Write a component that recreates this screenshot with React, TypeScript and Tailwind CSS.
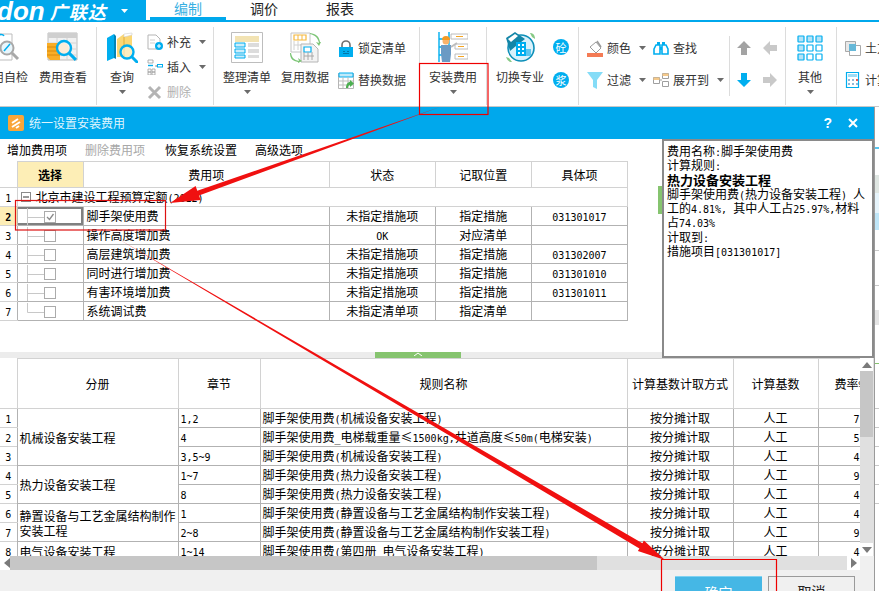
import type { ReactNode } from 'react';

const CYAN = '#00aeef';

// ascii runs are half width in the reference (SimSun), so give them a 6px mono face
function Mix({ text }: { text: string }) {
  return (
    <>
      {text.split(/([\x20-\x7e]+)/).map((part, i) =>
        i % 2 === 1 ? (
          <span key={i} className="font-['DejaVu_Sans_Mono',monospace] text-[10px] leading-none">
            {part}
          </span>
        ) : (
          part
        ),
      )}
    </>
  );
}

function Caret({ color = '#6b6b6b' }: { color?: string }) {
  return (
    <svg width="7" height="4" viewBox="0 0 7 4" className="shrink-0">
      <path d="M0 0h7L3.5 4z" fill={color} />
    </svg>
  );
}

function Icon({ w = 16, h = 16, children }: { w?: number; h?: number; children: ReactNode }) {
  return (
    <svg width={w} height={h} viewBox={`0 0 ${w} ${h}`} className="shrink-0" fill="none">
      {children}
    </svg>
  );
}

/* ---------- ribbon icons ---------- */

const Magnifier = ({ x, y, r = 6, c = CYAN }: { x: number; y: number; r?: number; c?: string }) => (
  <>
    <circle cx={x} cy={y} r={r} stroke={c} strokeWidth="2.4" fill="#ffffff" fillOpacity="0.55" />
    <path d={`M${x + r * 0.7} ${y + r * 0.7}l${r} ${r}`} stroke={c} strokeWidth="3" />
  </>
);

const CheckIcon = () => (
  <Icon w={32} h={31}>
    <path d="M0 2h18v26H0z" fill="#fff" stroke="#bdbdbd" />
    <path d="M3 4c3-2 6-2 7 0" stroke={CYAN} strokeWidth="1.5" />
    <circle cx="13" cy="16" r="6.5" fill="#e8f6fc" stroke="#a8a8a8" strokeWidth="2" />
    <path d="M10 19l6-7" stroke={CYAN} strokeWidth="1.5" />
    <path d="M18 21l6 6" stroke="#a8a8a8" strokeWidth="3" />
  </Icon>
);

const FeeViewIcon = () => (
  <Icon w={32} h={31}>
    <path d="M1 1h29v27H1z" fill="#f1f1f1" stroke="#bcbcbc" />
    <path d="M1 1h29v5H1z" fill="#cfcfcf" />
    <path d="M1 11h29M1 17h29M1 23h29M10 6v22M20 6v22" stroke="#d4d4d4" />
    <path d="M0 11h13v17H3l-3-3z" fill="#f9ad26" />
    <path d="M0 15h13M0 19h13M0 23h13" stroke="#d98a0c" />
    <circle cx="16" cy="17" r="6" fill="#fbd6a6" />
    <Magnifier x={17} y={16} r={7} />
  </Icon>
);

const QueryIcon = () => (
  <Icon w={32} h={31}>
    <path d="M1 6l7-4v24l-7 3z" fill={CYAN} />
    <path d="M8 2l2 2v23l-2-1z" fill="#0085b8" />
    <path d="M11 7l7-5 8 0v23H11z" fill="#fbd774" />
    <path d="M18 2l8-1v2l-8 2z" fill="#fff" stroke="#cfcfcf" strokeWidth="0.6" />
    <path d="M18 5v22" stroke="#dfae3a" />
    <Magnifier x={21} y={20} r={6.5} />
  </Icon>
);

const AddDocIcon = () => (
  <Icon>
    <path d="M1 1h8l4 4v10H1z" fill="#fff" stroke="#b5b5b5" />
    <path d="M3 6h5M3 9h5" stroke="#cfcfcf" />
    <circle cx="12" cy="12" r="4" fill={CYAN} />
    <path d="M10 12h4M12 10v4" stroke="#fff" />
  </Icon>
);

const InsertIcon = () => (
  <Icon>
    <path d="M1 1h5v3H1zM1 10h3v3H1zM5 10h3v3H5zM1 13h3v3H1zM5 13h3v3H5z" stroke="#9f9f9f" strokeWidth="0.8" />
    <path d="M1 6.5h5" stroke={CYAN} strokeWidth="1.4" />
    <path d="M8 7h3M9 7h2" stroke="#9f9f9f" />
    <rect x="10.5" y="5.5" width="5" height="2.5" stroke={CYAN} />
  </Icon>
);

const DeleteIcon = () => (
  <Icon>
    <path d="M2 3l11 11M13 3L2 14" stroke="#b4b4b4" strokeWidth="3" />
  </Icon>
);

const SortIcon = () => (
  <Icon w={32} h={31}>
    <path d="M.5.5h31v30H.5z" fill="#fff" stroke="#bdbdbd" />
    <path d="M4 4h24v6H4z" fill="#f2e3b3" />
    <path d="M4 11h10v4H4zM4 17h10v4H4zM4 23h10v3H4z" fill="#cdeefb" stroke={CYAN} />
    <path d="M17 11h11v4H17zM17 17h11v4H17zM17 23h11v3H17z" fill="#dcdcdc" />
  </Icon>
);

const ReuseIcon = () => (
  <Icon w={31} h={31}>
    <path d="M1 1h19v19H1z" fill="#fff" stroke="#c4c4c4" />
    <path d="M4 3h12v5H4z" fill="#fff" stroke="#f5b83d" strokeWidth="1.2" />
    <path d="M8 3v5M12 3v5" stroke="#f5b83d" />
    <path d="M4 9v9M8 9v9M4 13h10" stroke="#d0d0d0" />
    <path d="M11 12h12l5 5v13H11z" fill="#f3f3f3" stroke="#b5b5b5" />
    <path d="M14 15h7v5h-7z" fill="#fff" stroke={CYAN} strokeWidth="1.2" />
    <path d="M14 20v8M18 20v8M22 20v8M14 24h10" stroke="#a8a8a8" />
    <path d="M20 2c5 1 8 4 9 9l-3-1 3 4 2-4-1 0c-1-6-4-8-10-9z" fill="#7cc576" />
    <path d="M1 21c1 5 3 7 8 8l-1-3 4 3-4 2v-1c-5-1-8-3-8-9z" fill="#7cc576" />
  </Icon>
);

const LockIcon = () => (
  <Icon h={17}>
    <path d="M4 8V5a4 4 0 018 0v3" stroke="#6f6f6f" strokeWidth="1.6" />
    <path d="M1 7h14v10H1z" fill={CYAN} />
    <path d="M5 11h2v1H5zM9 11h2v1H9zM5 13h6v1H5z" fill="#0277a8" />
  </Icon>
);

const ReplaceIcon = () => (
  <Icon h={17}>
    <path d="M.5 1.5h15v15H.5z" fill="#fff" stroke="#b5b5b5" />
    <path d="M1 1h14v4H1z" fill="#bfe9f9" stroke={CYAN} />
    <path d="M5 5v11M10 5v11M1 9h14M1 13h14" stroke="#bdbdbd" />
    <path d="M8 16c0-4 2-6 4-6V8l4 3.5-4 3.5v-2c-1 0-2 1-2 3z" fill="#4caf50" />
  </Icon>
);

const InstallIcon = () => (
  <Icon w={30} h={31}>
    <path d="M1 0v30M11 0v30M1 7h10M1 15h10M1 23h10" stroke={CYAN} strokeWidth="1.4" />
    <path d="M13 2h17v5H13zM17 12h13v5H17zM17 22h13v5H17z" fill="#fff" stroke="#bcbcbc" />
    <path d="M18 4.5h7M20 14.5h6M20 24.5h6" stroke="#f5a623" />
    <circle cx="8" cy="9" r="3.5" fill="#f9b26b" />
    <path d="M4 8a4 4 0 018 0z" fill="#f59a23" />
    <path d="M3 13h10v9l-1 8H4l-1-8z" fill="#6b9ac4" />
    <path d="M13 15l6-4" stroke="#bdbdbd" strokeWidth="2" />
  </Icon>
);

const SwitchIcon = () => (
  <Icon w={31} h={31}>
    <circle cx="16" cy="16" r="13" fill="#d9f1fb" stroke="#0d8fb8" strokeWidth="1.6" />
    <path d="M1 6l9-6 10 7-9 7-6 5z" fill="#1486a8" />
    <path d="M3 7l7-5 3 2-7 6z" fill="#fff" />
    <path d="M11 10h10v14H11z" fill={CYAN} />
    <path d="M21 17h5v7h-5z" fill="#5cc6ee" />
    <path d="M13 12h2v2h-2zM17 12h2v2h-2zM13 16h2v2h-2zM17 16h2v2h-2zM13 20h2v2h-2zM17 20h2v2h-2z" fill="#fff" />
    <path d="M25 1c3 0 5 2 5 6l-3-2z" fill="#86c985" />
    <path d="M1 25c1 3 3 5 6 5l-3-4z" fill="#86c985" />
  </Icon>
);

const BucketIcon = () => (
  <Icon h={17}>
    <path d="M3 7l6-5 5 6-5 5z" fill="#fff" stroke="#9a9a9a" />
    <path d="M10 1l4 6" stroke="#9a9a9a" strokeWidth="1.5" />
    <path d="M0 13h16v4H0z" fill="#f47b55" />
  </Icon>
);

const FindIcon = () => (
  <Icon>
    <path d="M4 2h3v5H4zM9 2h3v5H9z" fill={CYAN} />
    <path d="M1 9l2-4h4v9H1zM9 5h4l2 4v5H9z" fill="#fff" stroke={CYAN} strokeWidth="1.6" />
    <path d="M7 7h2v3H7z" fill={CYAN} />
  </Icon>
);

const FilterIcon = () => (
  <Icon h={17}>
    <path d="M0 0h16L10 8v9l-4-2V8z" fill="#84dcf7" />
  </Icon>
);

const ExpandIcon = () => (
  <Icon>
    <path d="M.5 5.5h6v6h-6zM9.5 1.5h6v5h-6zM9.5 9.5h6v5h-6z" fill="#fff" stroke="#9f9f9f" />
    <path d="M.5 5.5h6V8h-6zM9.5 1.5h6V4h-6z" fill="#f5c98a" />
    <path d="M7 8h2" stroke="#9f9f9f" />
  </Icon>
);

const ArrowIcon = ({ dir, color }: { dir: 'up' | 'down' | 'left' | 'right'; color: string }) => {
  const rotate = { up: 0, right: 90, down: 180, left: 270 }[dir];
  return (
    <Icon>
      <path d="M8 1l7 7h-4v7H5V8H1z" fill={color} transform={`rotate(${rotate} 8 8)`} />
    </Icon>
  );
};

const OtherIcon = () => (
  <Icon w={26} h={26}>
    {[0, 9, 18].flatMap((y, r) =>
      [0, 9, 18].map((x, c) => (
        <rect
          key={`${r}${c}`}
          x={x + 1}
          y={y + 1}
          width="6"
          height="6"
          rx="0.5"
          stroke={CYAN}
          strokeWidth="1.2"
          fill={(r === 0 || c === 0) && !(r === 2 && c > 0) ? '#b5e3f7' : '#fff'}
        />
      )),
    )}
  </Icon>
);

const EarthIcon = () => (
  <Icon>
    <path d="M.5 1.5h10v10H.5z" fill="#e8e8e8" stroke="#a9a9a9" />
    <path d="M4.5 5.5h11v10h-11z" fill="#fff" stroke="#a9a9a9" />
    <path d="M4 4h7v7H4z" fill="#66b8d8" />
  </Icon>
);

const CalcIcon = () => (
  <Icon>
    <path d="M1.5 .5h12v15h-12z" fill="#fff" stroke={CYAN} strokeWidth="1.2" />
    <path d="M3 2h9v3H3z" fill="#9fdcf5" />
    <path d="M3 7h2v2H3zM7 7h2v2H7zM3 11h2v2H3zM7 11h2v2H7zM11 11h2v2h-2z" fill="#8fb8d8" />
    <path d="M11 7h2v2h-2z" fill="#ef5350" />
  </Icon>
);

/* ---------- ribbon pieces ---------- */

function BigButton({ icon, label, caret, w = 56 }: { icon: ReactNode; label: string; caret?: boolean; w?: number }) {
  return (
    <div className="flex shrink-0 flex-col items-center pt-[10px]" style={{ width: w }}>
      <div className="flex h-[31px] items-center justify-center">{icon}</div>
      <div className="mt-[6px] whitespace-nowrap text-[12px] leading-[16px] text-[#333]">{label}</div>
      {caret && (
        <div className="mt-[5px]">
          <Caret />
        </div>
      )}
    </div>
  );
}

function SmallButton({
  icon,
  label,
  caret,
  muted,
  h = 25,
}: {
  icon: ReactNode;
  label: string;
  caret?: boolean;
  muted?: boolean;
  h?: number;
}) {
  return (
    <div className="flex items-center gap-[4px]" style={{ height: h }}>
      {icon}
      <span className={`whitespace-nowrap text-[12px] leading-[16px] ${muted ? 'text-[#b0b0b0]' : 'text-[#333]'}`}>
        {label}
      </span>
      {caret && (
        <span className="ml-[4px]">
          <Caret />
        </span>
      )}
    </div>
  );
}

function Group({ w, children, className = '' }: { w: number; children: ReactNode; className?: string }) {
  return (
    <div className={`relative flex h-full shrink-0 ${className}`} style={{ width: w }}>
      {children}
      <div className="absolute right-0 top-[5px] h-[78px] w-px bg-[#dcdcdc]" />
    </div>
  );
}

function Ribbon() {
  return (
    <div className="flex h-[85px] overflow-hidden border-b border-[#c8c8c8] bg-white">
      <Group w={97}>
        <div className="ml-[-18px]">
          <BigButton icon={<CheckIcon />} label="用自检" />
        </div>
        <div className="ml-[-3px]">
          <BigButton icon={<FeeViewIcon />} label="费用查看" />
        </div>
      </Group>
      <Group w={117} className="pl-[5px]">
        <BigButton w={40} icon={<QueryIcon />} label="查询" caret />
        <div className="ml-[5px] flex flex-col pt-[7px]">
          <SmallButton icon={<AddDocIcon />} label="补充" caret />
          <SmallButton icon={<InsertIcon />} label="插入" caret />
          <SmallButton icon={<DeleteIcon />} label="删除" muted />
        </div>
      </Group>
      <Group w={206} className="pl-[5px]">
        <BigButton icon={<SortIcon />} label="整理清单" caret />
        <div className="ml-[2px]">
          <BigButton icon={<ReuseIcon />} label="复用数据" />
        </div>
        <div className="ml-[5px] flex flex-col pt-[10px]">
          <SmallButton h={32} icon={<LockIcon />} label="锁定清单" />
          <SmallButton h={32} icon={<ReplaceIcon />} label="替换数据" />
        </div>
      </Group>
      <Group w={67} className="pl-[5px]">
        <BigButton icon={<InstallIcon />} label="安装费用" caret />
      </Group>
      <Group w={92} className="pl-[5px]">
        <BigButton icon={<SwitchIcon />} label="切换专业" />
        <div className="ml-[5px] flex flex-col items-center gap-[17px] pt-[17px]">
          <div className="flex h-[16px] w-[16px] items-center justify-center rounded-full bg-[#00aeef] text-[11px] leading-none text-white">
            砼
          </div>
          <div className="flex h-[16px] w-[16px] items-center justify-center rounded-full bg-[#00aeef] text-[11px] leading-none text-white">
            浆
          </div>
        </div>
      </Group>
      <Group w={207} className="pl-[8px]">
        <div className="flex w-[66px] flex-col pt-[10px]">
          <SmallButton h={32} icon={<BucketIcon />} label="颜色" caret />
          <SmallButton h={32} icon={<FilterIcon />} label="过滤" caret />
        </div>
        <div className="flex w-[76px] flex-col pt-[10px]">
          <SmallButton h={32} icon={<FindIcon />} label="查找" />
          <SmallButton h={32} icon={<ExpandIcon />} label="展开到" caret />
        </div>
        <div className="mt-[14px] h-[60px] w-px bg-[#dcdcdc]" />
        <div className="ml-[6px] grid grid-cols-[26px_16px] grid-rows-[32px_32px] pt-[10px]">
          <div className="flex items-center">
            <ArrowIcon dir="up" color="#a3a3a3" />
          </div>
          <div className="flex items-center">
            <ArrowIcon dir="left" color="#c9c9c9" />
          </div>
          <div className="flex items-center">
            <ArrowIcon dir="down" color={CYAN} />
          </div>
          <div className="flex items-center">
            <ArrowIcon dir="right" color="#c9c9c9" />
          </div>
        </div>
      </Group>
      <Group w={51} className="pl-[4px]">
        <BigButton w={40} icon={<OtherIcon />} label="其他" caret />
      </Group>
      <div className="flex flex-col pl-[8px] pt-[10px]">
        <SmallButton h={32} icon={<EarthIcon />} label="土方" />
        <SmallButton h={32} icon={<CalcIcon />} label="计算" />
      </div>
    </div>
  );
}

/* ---------- upper fee table ---------- */

const feeRows = [
  { no: '2', name: '脚手架使用费', state: '未指定措施项', pos: '指定措施', code: '031301017', checked: true },
  { no: '3', name: '操作高度增加费', state: 'OK', pos: '对应清单', code: '' },
  { no: '4', name: '高层建筑增加费', state: '未指定措施项', pos: '指定措施', code: '031302007' },
  { no: '5', name: '同时进行增加费', state: '未指定措施项', pos: '指定措施', code: '031301010' },
  { no: '6', name: '有害环境增加费', state: '未指定措施项', pos: '指定措施', code: '031301011' },
  { no: '7', name: '系统调试费', state: '未指定清单项', pos: '指定清单', code: '', last: true },
];

const headCell = 'border border-[#d2d2d2] p-0 text-center font-normal';
const bodyCell = 'h-[19px] overflow-hidden whitespace-nowrap border border-[#b2b2b2] p-0 text-center';

function TreeCheck({ checked, last }: { checked?: boolean; last?: boolean }) {
  return (
    <svg width="66" height="17" viewBox="0 0 66 17" className="block" fill="none">
      <path d={`M9.5 0V${last ? 9.5 : 17}M9.5 9.5H26`} stroke="#c8c8c8" />
      <rect x="26.5" y="3.5" width="11" height="11" fill="#fff" stroke="#ababab" />
      {checked && <path d="M29 9l2.5 2.5L35.5 6" stroke="#8a8a8a" strokeWidth="1.3" />}
    </svg>
  );
}

function FeeTable() {
  return (
    <table className="w-[628px] table-fixed text-[12px] leading-[16px] text-black">
      <colgroup>
        <col className="w-[17px]" />
        <col className="w-[66px]" />
        <col className="w-[246px]" />
        <col className="w-[106px]" />
        <col className="w-[96px]" />
        <col className="w-[96px]" />
      </colgroup>
      <thead>
        <tr className="h-[26px]">
          <th className="border-b border-[#d2d2d2] p-0" />
          <th className="border border-[#d2d2d2] bg-[#fdeeb6] p-0 text-center font-bold">选择</th>
          <th className={headCell}>费用项</th>
          <th className={headCell}>状态</th>
          <th className={headCell}>记取位置</th>
          <th className={headCell}>具体项</th>
        </tr>
      </thead>
      <tbody>
        <tr>
          <td className="h-[19px] border-b border-[#d2d2d2] p-0 text-center">
            <Mix text="1" />
          </td>
          <td colSpan={5} className="h-[19px] border border-[#d2d2d2] p-0 text-left">
            <span className="inline-flex items-center">
              <svg width="10" height="10" viewBox="0 0 10 10" className="ml-[3px] mr-[5px]" fill="none">
                <rect x="0.5" y="0.5" width="9" height="9" stroke="#8a8a8a" />
                <path d="M2 5h6" stroke="#333" />
              </svg>
              <span>
                北京市建设工程预算定额
                <Mix text="(2012)" />
              </span>
            </span>
          </td>
        </tr>
        {feeRows.map((row) => (
          <tr key={row.no}>
            <td
              className={`h-[19px] border-b border-[#d2d2d2] p-0 text-center ${
                row.checked ? 'bg-[#fdeeb6] font-bold' : ''
              }`}
            >
              <Mix text={row.no} />
            </td>
            <td
              className={`h-[19px] border border-[#b2b2b2] p-0 ${
                row.checked ? 'shadow-[inset_0_2px_0_#808080,inset_0_-2px_0_#808080,inset_-2px_0_0_#808080]' : ''
              }`}
            >
              <TreeCheck checked={row.checked} last={row.last} />
            </td>
            <td className={`${bodyCell} !text-left pl-[3px]`}>{row.name}</td>
            <td className={bodyCell}>
              <Mix text={row.state} />
            </td>
            <td className={bodyCell}>{row.pos}</td>
            <td className={bodyCell}>
              <Mix text={row.code} />
            </td>
          </tr>
        ))}
      </tbody>
    </table>
  );
}

/* ---------- lower rule table ---------- */

const ruleRows = [
  { chapter: '1,2', rule: '脚手架使用费(机械设备安装工程)', rate: '7' },
  { chapter: '4', rule: '脚手架使用费_电梯载重量≤1500kg,井道高度≤50m(电梯安装)', rate: '5' },
  { chapter: '3,5~9', rule: '脚手架使用费(机械设备安装工程)', rate: '4' },
  { chapter: '1~7', rule: '脚手架使用费(热力设备安装工程)', rate: '9' },
  { chapter: '8', rule: '脚手架使用费(热力设备安装工程)', rate: '4' },
  { chapter: '1', rule: '脚手架使用费(静置设备与工艺金属结构制作安装工程)', rate: '4' },
  { chapter: '2~8', rule: '脚手架使用费(静置设备与工艺金属结构制作安装工程)', rate: '9' },
  { chapter: '1~14', rule: '脚手架使用费(第四册 电气设备安装工程)', rate: '4' },
];

const volumes: Record<number, { span: number; name: string }> = {
  0: { span: 3, name: '机械设备安装工程' },
  3: { span: 2, name: '热力设备安装工程' },
  5: { span: 2, name: '静置设备与工艺金属结构制作安装工程' },
  7: { span: 1, name: '电气设备安装工程' },
};

function RuleTable() {
  return (
    <table className="w-[880px] table-fixed text-[12px] leading-[16px] text-black">
      <colgroup>
        <col className="w-[17px]" />
        <col className="w-[161px]" />
        <col className="w-[82px]" />
        <col className="w-[367px]" />
        <col className="w-[106px]" />
        <col className="w-[85px]" />
        <col className="w-[62px]" />
      </colgroup>
      <thead>
        <tr className="h-[50px]">
          <th className="border-b border-[#d2d2d2] p-0" />
          <th className={headCell}>分册</th>
          <th className={headCell}>章节</th>
          <th className={headCell}>规则名称</th>
          <th className={headCell}>计算基数计取方式</th>
          <th className={headCell}>计算基数</th>
          <th className={`${headCell} !text-left pl-[16px]`}>
            费率<Mix text="%" />
          </th>
        </tr>
      </thead>
      <tbody>
        {ruleRows.map((row, i) => (
          <tr key={i}>
            <td className="h-[19px] border-b border-[#d2d2d2] p-0 text-center">
              <Mix text={String(i + 1)} />
            </td>
            {volumes[i] && (
              <td rowSpan={volumes[i].span} className="border border-[#b2b2b2] py-0 pl-[2px] pr-0 text-left leading-[15px]">
                {volumes[i].name}
              </td>
            )}
            <td className={`${bodyCell} !text-left pl-[2px]`}>
              <Mix text={row.chapter} />
            </td>
            <td className={`${bodyCell} !text-left pl-[2px]`}>
              <Mix text={row.rule} />
            </td>
            <td className={bodyCell}>按分摊计取</td>
            <td className={bodyCell}>人工</td>
            <td className={`${bodyCell} !text-left pl-[35px]`}>
              <Mix text={row.rate} />
            </td>
          </tr>
        ))}
      </tbody>
    </table>
  );
}

function ScrollButton({ dir }: { dir: 'up' | 'down' | 'left' | 'right' }) {
  const path = { up: 'M0 6L5 0l5 6z', down: 'M0 0l5 6 5-6z', left: 'M6 0v10L0 5z', right: 'M0 0v10l6-5z' }[dir];
  const box = dir === 'up' || dir === 'down' ? '0 0 10 6' : '0 0 6 10';
  const vertical = dir === 'up' || dir === 'down';
  return (
    <div className={`flex items-center justify-center bg-white ${vertical ? 'h-[13px] w-[13px]' : 'h-[14px] w-[13px]'}`}>
      <svg width={vertical ? 10 : 6} height={vertical ? 6 : 10} viewBox={box}>
        <path d={path} fill="#7a7a7a" />
      </svg>
    </div>
  );
}

/* ---------- page ---------- */

export default function App() {
  return (
    <div className="relative flex h-[591px] w-[879px] flex-col overflow-hidden bg-white font-['Noto_Sans_CJK_SC',sans-serif]">
      {/* top bar */}
      <div className="flex h-[22px] shrink-0">
        <div className="flex h-[22px] w-[146px] items-center overflow-hidden bg-[#00a8ec] text-white">
          <span className="ml-[-3px] font-['Liberation_Sans',sans-serif] text-[26px] font-bold italic leading-[20px]">
            don
          </span>
          <span className="ml-[5px] text-[18px] font-bold italic leading-[20px] tracking-[1px]">广联达</span>
          <span className="ml-[14px]">
            <Caret color="#ffffff" />
          </span>
        </div>
        <div className="flex h-[22px] flex-1 border-b-2 border-[#00a8ec] pl-[4px] text-[14px] leading-[16px] text-[#222]">
          <div className="flex h-[20px] w-[76px] justify-center border-b-[3px] border-[#00a8ec] pt-0 text-[#3ab0e2]">
            编制
          </div>
          <div className="w-[76px] text-center">调价</div>
          <div className="w-[76px] text-center">报表</div>
        </div>
      </div>

      <Ribbon />

      <div className="flex min-h-0 flex-1">
        {/* dialog */}
        <div className="flex w-[875px] shrink-0 flex-col border-r border-[#9a9a9a] bg-[#f0f0f0]">
          <div className="flex h-[32px] shrink-0 items-center bg-[#00a8ec] pl-[8px] pr-[16px]">
            <svg width="16" height="16" viewBox="0 0 16 16" className="mr-[5px]" fill="none">
              <rect width="16" height="16" rx="2" fill="#f9a63a" />
              <path d="M4 8l6-4M4 12l8-5M11 11l-3 2" stroke="#fff" strokeWidth="2" />
            </svg>
            <span className="text-[12px] leading-[16px] text-[#dff4fd]">统一设置安装费用</span>
            <span className="ml-auto font-['Liberation_Sans',sans-serif] text-[14px] font-bold leading-none text-white">
              ?
            </span>
            <svg width="10" height="10" viewBox="0 0 10 10" className="ml-[16px]" fill="none">
              <path d="M1 1l8 8M9 1L1 9" stroke="#fff" strokeWidth="2" />
            </svg>
          </div>

          <div className="flex h-[219px] shrink-0 bg-white">
            <div className="relative flex w-[662px] shrink-0 flex-col">
              <div className="flex h-[22px] shrink-0 items-center pl-[7px] text-[12px] leading-[16px] text-black">
                <span>增加费用项</span>
                <span className="ml-[18px] text-[#a8a8a8]">删除费用项</span>
                <span className="ml-[20px]">恢复系统设置</span>
                <span className="ml-[18px]">高级选项</span>
              </div>
              <div className="min-h-0 flex-1">
                <FeeTable />
              </div>
              <div className="relative h-[6px] shrink-0 bg-[#ececec]">
                <div className="absolute left-[375px] top-0 flex h-[6px] w-[86px] justify-center bg-[#86c46f]">
                  <svg width="8" height="4" viewBox="0 0 8 4" fill="none">
                    <path d="M0 4l4-3 4 3" stroke="#fff" />
                  </svg>
                </div>
              </div>
              <div className="absolute right-0 top-[47px] h-[28px] w-[4px] bg-[#86c46f]" />
            </div>
            <div className="w-[212px] shrink-0 border-2 border-[#8a8a8a] bg-white pl-[3px] pt-[3px] text-[12px] leading-[14.3px] text-black">
              <div>
                费用名称
                <Mix text=":" />
                脚手架使用费
              </div>
              <div>
                计算规则
                <Mix text=":" />
              </div>
              <div className="text-[13px] font-bold">热力设备安装工程</div>
              <div>
                <Mix text="脚手架使用费(热力设备安装工程) 人" />
              </div>
              <div>
                <Mix text="工的4.81%, 其中人工占25.97%,材料" />
              </div>
              <div>
                <Mix text="占74.03%" />
              </div>
              <div>
                计取到
                <Mix text=":" />
              </div>
              <div>
                <Mix text="措施项目[031301017]" />
              </div>
            </div>
          </div>

          <div className="flex h-[198px] shrink-0">
            <div className="w-[860px] shrink-0 overflow-hidden bg-white">
              <RuleTable />
            </div>
            <div className="flex w-[14px] shrink-0 flex-col bg-[#e0e0e0]">
              <ScrollButton dir="up" />
              <div className="h-[66px] w-[13px] bg-[#c6c6c6]" />
              <div className="flex-1" />
              <ScrollButton dir="down" />
            </div>
          </div>

          <div className="flex h-[14px] w-[860px] shrink-0 bg-[#e0e0e0]">
            <div className="w-[10px] overflow-hidden">
              <ScrollButton dir="left" />
            </div>
            <div className="w-[587px] bg-[#c6c6c6]" />
            <div className="flex-1" />
            <ScrollButton dir="right" />
          </div>

          <div className="flex justify-end gap-[6px] pr-[19px] pt-[6px]">
            <button className="h-[30px] w-[87px] border-t border-[#7fd2f2] bg-[#45b7e5] text-[14px] leading-[30px] text-white">
              确定
            </button>
            <button className="h-[30px] w-[87px] border border-[#9a9a9a] text-[14px] leading-[28px] text-[#222]">
              取消
            </button>
          </div>
        </div>

        {/* what shows behind the dialog on the right */}
        <div className="flex w-[4px] flex-col bg-white">
          <div className="mt-[40px] h-[2px] bg-[#58c4ee]" />
          <div className="mt-[26px] h-[18px] bg-[#dfe6e2]" />
          <div className="h-[20px] bg-[#e6f4fb]" />
          <div className="h-[17px] bg-[#bfe6f8]" />
          <div className="mt-[20px] h-px bg-[#c8c8c8]" />
          <div className="mt-[34px] h-px bg-[#c8c8c8]" />
          <div className="mt-[24px] h-[15px] bg-[#e4e4e4]" />
          <div className="mt-[38px] h-px bg-[#86c46f]" />
          <div className="mt-[44px] h-px bg-[#c8c8c8]" />
          <div className="mt-[18px] h-px bg-[#c8c8c8]" />
          <div className="mt-[18px] h-px bg-[#c8c8c8]" />
          <div className="mt-[18px] h-px bg-[#c8c8c8]" />
          <div className="mt-[18px] h-px bg-[#c8c8c8]" />
          <div className="mt-[18px] h-px bg-[#c8c8c8]" />
        </div>
      </div>

      {/* red markup drawn over the screenshot */}
      <svg className="pointer-events-none absolute inset-0" width="879" height="591" viewBox="0 0 879 591" fill="none">
        <rect x="419.5" y="63.5" width="68.5" height="51" stroke="#ee0000" strokeWidth="1.2" />
        <rect x="15.5" y="200.5" width="150" height="29.5" stroke="#dd1111" strokeWidth="1.2" />
        <path d="M661.5 600V559.5H776.5V600" stroke="#ee0000" strokeWidth="1.2" />
        <path d="M440 107L199.0 195.4L200.7 200.0L170 203L195.6 186.0L197.3 190.7Z" fill="#f01010" />
        <path d="M115 237L639.4 548.4L637.9 551L665 560L643.9 540.6L642.4 543.2Z" fill="#f01010" />
      </svg>
    </div>
  );
}
